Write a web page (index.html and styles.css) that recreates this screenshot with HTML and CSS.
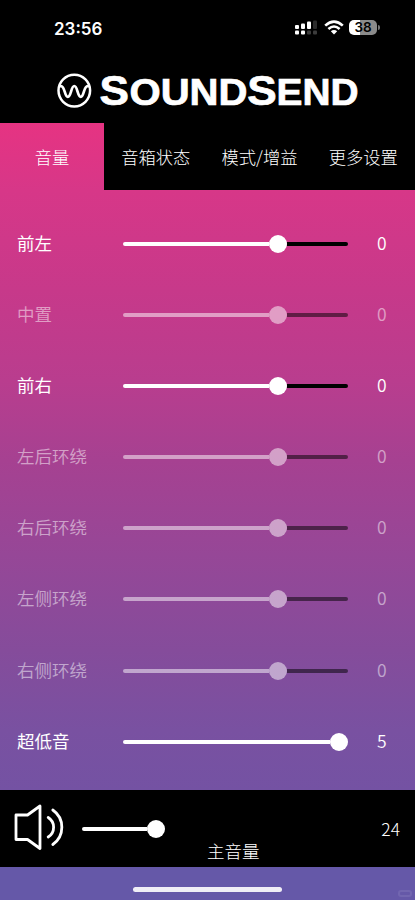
FILE: index.html
```html
<!DOCTYPE html>
<html lang="zh-CN">
<head>
<meta charset="utf-8">
<title>SoundSend</title>
<link rel="stylesheet" href="styles.css">
</head>
<body>
<div class="app">
  <header class="header">
    <div class="status">
      <span class="time">23:56</span>
      <div class="indicators">
        <svg width="22" height="15" viewBox="0 0 22 15" fill="#fff">
          <rect y="5" width="4" height="4" rx="1"/><rect x="6" y="3.5" width="4" height="5.500" rx="1"/><rect x="12" y="1.5" width="4" height="7.5" rx="1"/><rect x="18" y="0.5" width="4" height="8.5" rx="1" fill="#2c2c2c"/>
          <rect y="10.5" width="4" height="4" rx="1"/><rect x="6" y="10.5" width="4" height="4" rx="1"/><rect x="12" y="10.5" width="4" height="4" rx="1" fill="#3c3c3c"/><rect x="18" y="10.5" width="4" height="4" rx="1" fill="#3c3c3c"/>
        </svg>
        <svg class="wifi" width="20" height="15" viewBox="0 0 20 15" fill="none" stroke="#fff" stroke-width="2.6">
          <path d="M1.200 5.600Q10 -2.400 18.800 5.600M4.400 9Q10 4 15.600 9"/><path d="M10 14.400L6.800 11.200Q10 8.600 13.200 11.200Z" fill="#fff" stroke="none"/>
        </svg>
        <div class="battery"><span class="level">38</span><i class="tip"></i></div>
      </div>
    </div>
    <svg class="logo" width="415" height="60" viewBox="0 0 415 60" fill="#fff">
      <g fill="none" stroke="#fff" stroke-width="2.5"><circle cx="74.300" cy="30.600" r="15.800"/><path d="M59 26.200H61C65 26.200 64.500 36.800 67.800 36.800C71.200 36.800 71 26 74.300 26C77.600 26 77.400 36.800 80.800 36.800C84.100 36.800 83.600 26.200 87.600 26.200H89.500" stroke-width="2.700"/></g>
      <g class="wordmark">
        <text x="99.500" y="45" font-size="42" textLength="29.500" lengthAdjust="spacingAndGlyphs">S</text>
        <text x="129.500" y="45" font-size="36" textLength="118" lengthAdjust="spacingAndGlyphs">OUND</text>
        <text x="247.300" y="45" font-size="42" textLength="29.500" lengthAdjust="spacingAndGlyphs">S</text>
        <text x="276.500" y="45" font-size="36" textLength="82" lengthAdjust="spacingAndGlyphs">END</text>
      </g>
    </svg>
  </header>
  <nav class="tabs">
    <a class="tab active">音量</a><a class="tab">音箱状态</a><a class="tab">模式/增益</a><a class="tab">更多设置</a>
  </nav>
  <main class="channels">
    <div class="row"><span class="name">前左</span><div class="slider"><i class="fill"></i><i class="thumb"></i><i class="rest"></i></div><span class="value">0</span></div>
    <div class="row off"><span class="name">中置</span><div class="slider"><i class="fill"></i><i class="thumb"></i><i class="rest"></i></div><span class="value">0</span></div>
    <div class="row"><span class="name">前右</span><div class="slider"><i class="fill"></i><i class="thumb"></i><i class="rest"></i></div><span class="value">0</span></div>
    <div class="row off"><span class="name">左后环绕</span><div class="slider"><i class="fill"></i><i class="thumb"></i><i class="rest"></i></div><span class="value">0</span></div>
    <div class="row off"><span class="name">右后环绕</span><div class="slider"><i class="fill"></i><i class="thumb"></i><i class="rest"></i></div><span class="value">0</span></div>
    <div class="row off"><span class="name">左侧环绕</span><div class="slider"><i class="fill"></i><i class="thumb"></i><i class="rest"></i></div><span class="value">0</span></div>
    <div class="row off"><span class="name">右侧环绕</span><div class="slider"><i class="fill"></i><i class="thumb"></i><i class="rest"></i></div><span class="value">0</span></div>
    <div class="row"><span class="name">超低音</span><div class="slider full"><i class="fill"></i><i class="thumb"></i></div><span class="value">5</span></div>
  </main>
  <section class="master">
    <svg class="speaker" width="54" height="50" viewBox="0 0 54 50" fill="none" stroke="#fff" stroke-width="2.800" stroke-linecap="round" stroke-linejoin="round">
      <path d="M3 13H14.500L27 4V46.500L14.500 37.500H3Z"/><path d="M35.200 15.500A11.500 11.500 0 0 1 35.200 35M39.800 8A21 21 0 0 1 39.800 42.500"/>
    </svg>
    <div class="slider master-slider"><i class="fill"></i><i class="thumb"></i></div>
    <span class="master-label">主音量</span>
    <span class="master-value">24</span>
  </section>
  <footer class="home"><i class="home-bar"></i><i class="mark"></i></footer>
</div>
</body>
</html>
```
FILE: styles.css
```css
* { box-sizing: border-box; }
body { margin: 0; background: #000; }
.app {
  width: 415px;
  height: 900px;
  overflow: hidden;
  display: flex;
  flex-direction: column;
  color: #fff;
  font: 300 17.5px/24px "Noto Sans CJK SC", sans-serif;
  background: linear-gradient(#e63382 123px, #d73788 190px, #c7398a 290px, #b93d8e 380px, #a64191 460px, #964797 555px, #854c9b 650px, #7951a1 730px, #7452a3 790px, #6558a8 868px, #6558a8 900px);
}
.header { height: 123px; background: #000; flex: none; }
.status { height: 60px; padding: 0 27px 0 54px; display: flex; align-items: flex-start; justify-content: space-between; }
.time { margin-top: 17px; font: 600 17px/24px Inter, sans-serif; }
.indicators { display: flex; align-items: center; width: 93px; margin-top: 20px; }
.indicators svg { flex: none; }
.wifi { margin-left: 7px; }
.battery { display: flex; align-items: center; gap: 1px; margin-left: 5px; }
.level { width: 28px; height: 15px; border-radius: 5px; background: linear-gradient(90deg, #fff 39%, #8b8b8b 39%); color: #000; font: 600 13.5px/15px Inter, sans-serif; text-align: center; }
.tip { width: 2px; height: 5px; border-radius: 0 2px 2px 0; background: #777; }
.logo { display: block; }
.wordmark { font-family: "Liberation Sans", sans-serif; font-weight: 700; stroke: #fff; stroke-width: .7px; }
.tabs { height: 67px; flex: none; display: grid; grid-template-columns: 104px 103.5px 104px 103.5px; }
.tab { display: flex; align-items: center; justify-content: center; background: #000; white-space: nowrap; font-size: 17.3px; padding-top: 1px; }
.tab.active { background: none; }
.channels { height: 600px; flex: none; padding: 18.4px 0; }
.row { height: 71.1px; display: grid; grid-template-columns: 105.5px 225px 39px; padding-left: 17px; align-items: center; }
.name, .value { margin-top: -2px; }
.name { font-weight: 350; }
.row:not(.off) .name { font-weight: 400; }
.off .name, .off .value, .off .slider { opacity: .5; }
.value { text-align: right; font-weight: 350; }
.slider { display: flex; align-items: center; height: 18px; }
.fill { width: 146.5px; height: 4px; border-radius: 2px 0 0 2px; background: #fff; }
.thumb { width: 18px; height: 18px; flex: none; border-radius: 50%; background: #fff; }
.rest { flex: 1; height: 4px; border-radius: 0 2px 2px 0; background: #000; }
.full .fill { width: 207px; }
.master { height: 77px; flex: none; background: #000; display: grid; grid-template-columns: 69px 84px 1fr auto; align-items: center; padding: 0 15px 0 13px; }
.speaker { margin-top: -3px; }
.master-slider { margin-top: 1px; }
.master-slider .fill { width: 65px; }
.master-label { align-self: end; margin-left: 41px; padding-bottom: 4px; }
.master-value { margin-top: 1px; }
.home { height: 33px; flex: none; display: grid; grid-template-columns: 1fr 149px 1fr; }
.home-bar { grid-column: 2; height: 5px; margin-top: 20px; border-radius: 3px; background: #f0eef6; }
.mark { width: 14px; height: 7px; border: 2px solid #7266b0; border-radius: 3px; justify-self: end; margin: 23px 3px 0 0; }
```
